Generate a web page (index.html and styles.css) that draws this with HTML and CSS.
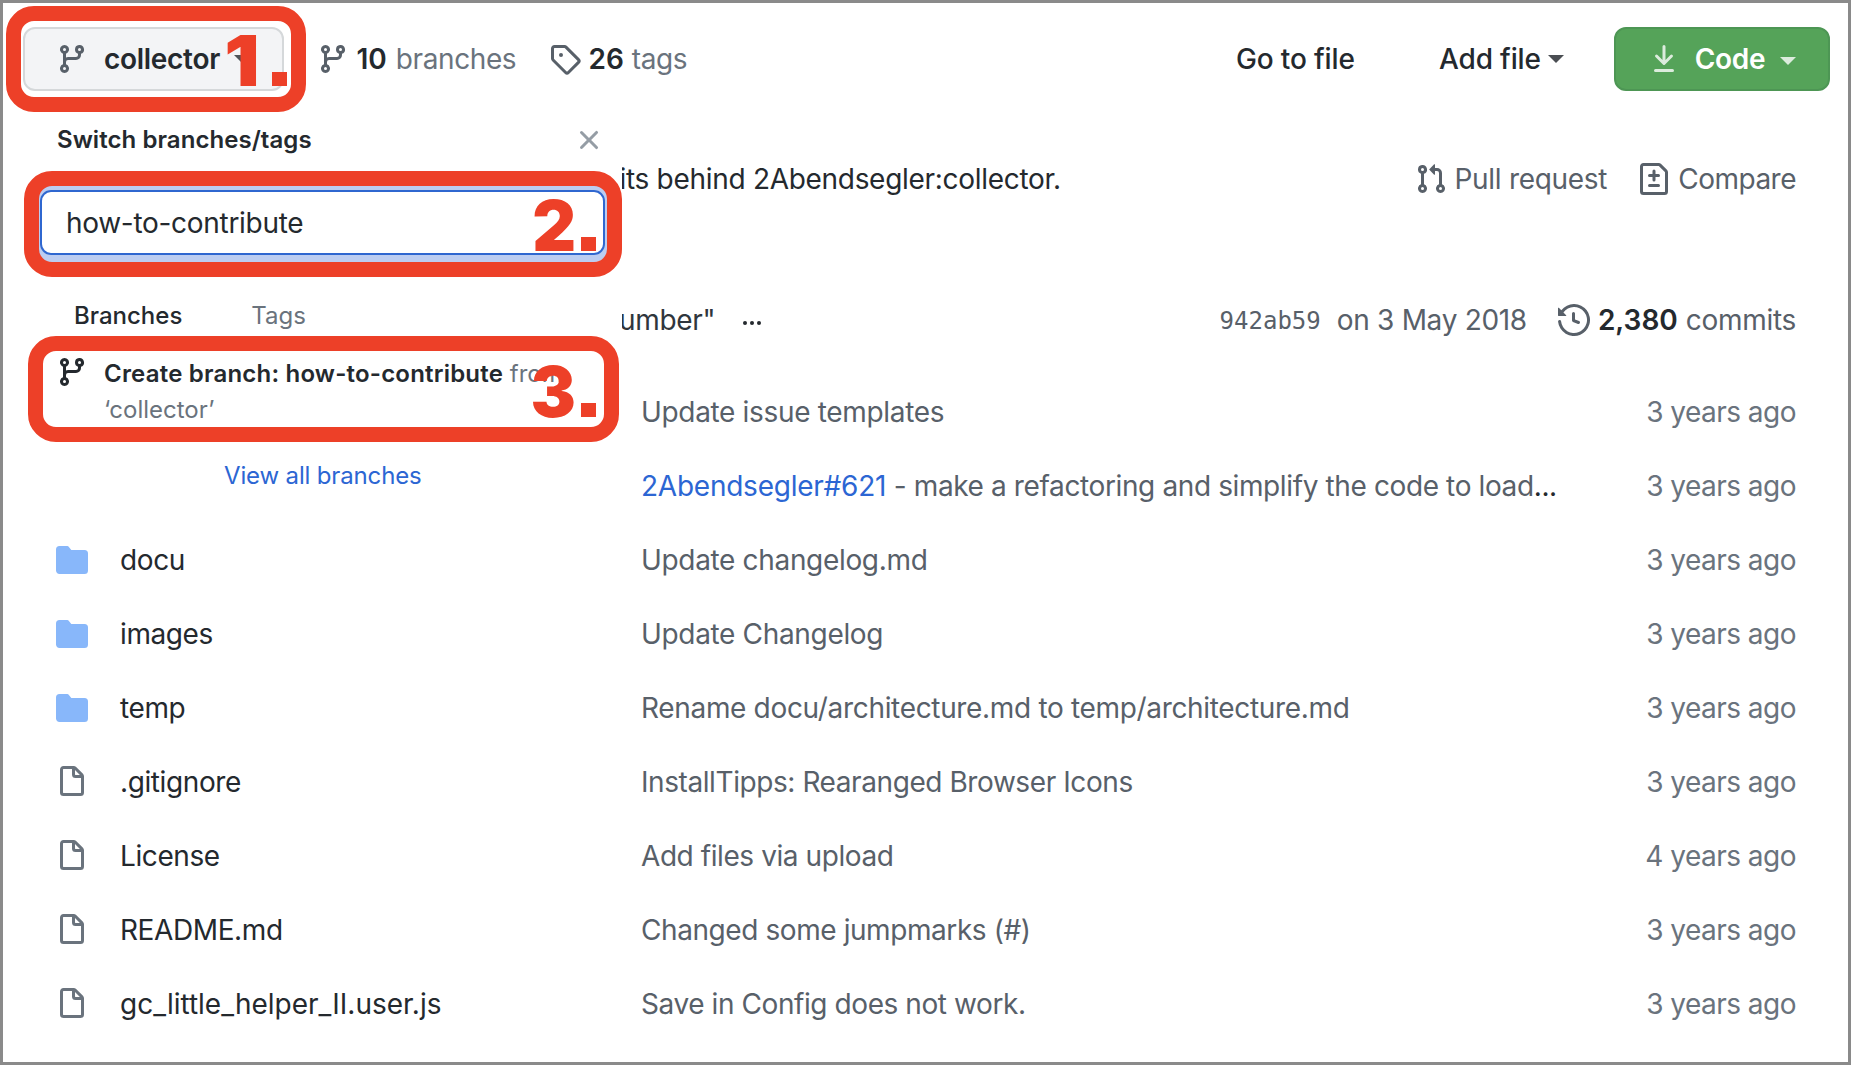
FILE: index.html
```html
<!DOCTYPE html>
<html lang="en">
<head>
<meta charset="utf-8">
<title>Switch branches/tags</title>
<link rel="stylesheet" href="styles.css">
</head>
<body>
<svg class="sprite" aria-hidden="true">
  <symbol id="branch" viewBox="0 0 16 16"><path fill-rule="evenodd" d="M11.75 2.5a.75.75 0 100 1.5.75.75 0 000-1.5zm-2.25.75a2.25 2.25 0 113 2.122V6A2.5 2.5 0 0110 8.5H6a1 1 0 00-1 1v1.128a2.251 2.251 0 11-1.5 0V5.372a2.25 2.25 0 111.5 0v1.836A2.492 2.492 0 016 7h4a1 1 0 001-1v-.628A2.25 2.25 0 019.5 3.25zM4.25 12a.75.75 0 100 1.5.75.75 0 000-1.5zM3.5 3.25a.75.75 0 111.5 0 .75.75 0 01-1.5 0z"/></symbol>
  <symbol id="tag" viewBox="0 0 16 16"><path fill-rule="evenodd" d="M2.5 7.775V2.75a.25.25 0 01.25-.25h5.025a.25.25 0 01.177.073l6.25 6.25a.25.25 0 010 .354l-5.025 5.025a.25.25 0 01-.354 0l-6.25-6.25a.25.25 0 01-.073-.177zm-1.5 0V2.75C1 1.784 1.784 1 2.75 1h5.025c.464 0 .91.184 1.238.513l6.25 6.25a1.75 1.75 0 010 2.474l-5.026 5.026a1.75 1.75 0 01-2.474 0l-6.25-6.25A1.75 1.75 0 011 7.775zM6 5a1 1 0 100 2 1 1 0 000-2z"/></symbol>
  <symbol id="download" viewBox="0 0 16 16"><path fill-rule="evenodd" d="M7.47 10.78a.75.75 0 001.06 0l3.75-3.75a.75.75 0 00-1.06-1.06L8.75 8.44V1.75a.75.75 0 00-1.5 0v6.69L4.78 5.97a.75.75 0 00-1.06 1.06l3.75 3.75zM3.75 13a.75.75 0 000 1.5h8.5a.75.75 0 000-1.5h-8.5z"/></symbol>
  <symbol id="pull" viewBox="0 0 16 16"><path fill-rule="evenodd" d="M7.177 3.073L9.573.677A.25.25 0 0110 .854v4.792a.25.25 0 01-.427.177L7.177 3.427a.25.25 0 010-.354zM3.75 2.5a.75.75 0 100 1.5.75.75 0 000-1.5zm-2.25.75a2.25 2.25 0 113 2.122v5.256a2.251 2.251 0 11-1.5 0V5.372A2.25 2.25 0 011.5 3.25zM11 2.5h-1V4h1a1 1 0 011 1v5.628a2.251 2.251 0 101.5 0V5A2.5 2.5 0 0011 2.5zm1 10.25a.75.75 0 111.5 0 .75.75 0 01-1.5 0zM3.75 12a.75.75 0 100 1.5.75.75 0 000-1.5z"/></symbol>
  <symbol id="diff" viewBox="0 0 16 16"><path fill-rule="evenodd" d="M2.75 1.5a.25.25 0 00-.25.25v12.5c0 .138.112.25.25.25h10.5a.25.25 0 00.25-.25V4.664a.25.25 0 00-.073-.177l-2.914-2.914a.25.25 0 00-.177-.073H2.75zM1 1.75C1 .784 1.784 0 2.75 0h7.586c.464 0 .909.184 1.237.513l2.914 2.914c.329.328.513.773.513 1.237v9.586A1.75 1.75 0 0113.25 16H2.75A1.75 1.75 0 011 14.25V1.75zm7 1.5a.75.75 0 01.75.75v1.5h1.5a.75.75 0 010 1.5h-1.5v1.5a.75.75 0 01-1.5 0V7h-1.5a.75.75 0 010-1.5h1.5V4A.75.75 0 018 3.25zm-3 8a.75.75 0 01.75-.75h4.5a.75.75 0 010 1.5h-4.5a.75.75 0 01-.75-.75z"/></symbol>
  <symbol id="history" viewBox="0 0 16 16"><path fill-rule="evenodd" d="M1.643 3.143L.427 1.927A.25.25 0 000 2.104V5.75c0 .138.112.25.25.25h3.646a.25.25 0 00.177-.427L2.715 4.215a6.5 6.5 0 11-1.18 4.458.75.75 0 10-1.493.154 8.001 8.001 0 101.6-5.684zM7.75 4a.75.75 0 01.75.75v2.992l2.028.812a.75.75 0 01-.557 1.392l-2.5-1A.75.75 0 017 8.25v-3.5A.75.75 0 017.75 4z"/></symbol>
  <symbol id="folder" viewBox="0 0 16 16"><path d="M1.75 1A1.75 1.75 0 000 2.75v10.5C0 14.216.784 15 1.75 15h12.5A1.75 1.75 0 0016 13.25v-8.5A1.75 1.75 0 0014.25 3h-6.5a.25.25 0 01-.2-.1l-.9-1.2c-.33-.44-.85-.7-1.4-.7h-3.5z"/></symbol>
  <symbol id="file" viewBox="0 0 16 16"><path fill-rule="evenodd" d="M3.75 1.5a.25.25 0 00-.25.25v11.5c0 .138.112.25.25.25h8.5a.25.25 0 00.25-.25V6H9.75A1.75 1.75 0 018 4.25V1.5H3.75zm5.75.56v2.19c0 .138.112.25.25.25h2.19L9.5 2.06zM2 1.75C2 .784 2.784 0 3.75 0h5.086c.464 0 .909.184 1.237.513l3.414 3.414c.329.328.513.773.513 1.237v8.086A1.75 1.75 0 0112.25 15h-8.5A1.75 1.75 0 012 13.25V1.75z"/></symbol>
  <symbol id="close" viewBox="0 0 16 16"><path fill-rule="evenodd" d="M3.72 3.72a.75.75 0 011.06 0L8 6.94l3.22-3.22a.75.75 0 111.06 1.06L9.06 8l3.22 3.22a.75.75 0 11-1.06 1.06L8 9.06l-3.22 3.22a.75.75 0 01-1.06-1.06L6.94 8 3.72 4.78a.75.75 0 010-1.06z"/></symbol>
</svg>

<main class="page">
  <header class="toolbar">
    <button class="btn branch-btn"><svg class="icon"><use href="#branch"/></svg><span>collector</span><i class="caret"></i></button>
    <a class="count branches"><svg class="icon"><use href="#branch"/></svg><b>10</b><span>branches</span></a>
    <a class="count tags"><svg class="icon"><use href="#tag"/></svg><b>26</b><span>tags</span></a>
    <span class="action">Go to file</span>
    <span class="action">Add file<i class="caret"></i></span>
    <button class="btn code-btn"><svg class="icon"><use href="#download"/></svg><span>Code</span><i class="caret"></i></button>
  </header>

  <section class="status">
    <span class="behind">its behind 2Abendsegler:collector.</span>
    <a class="compare-link pull"><svg class="icon"><use href="#pull"/></svg><span>Pull request</span></a>
    <a class="compare-link"><svg class="icon"><use href="#diff"/></svg><span>Compare</span></a>
  </section>

  <section class="commit">
    <span class="commit-title">umber"</span>
    <span class="more"><i></i><i></i><i></i></span>
    <code class="hash">942ab59</code>
    <span class="date">on 3 May 2018</span>
    <a class="commits"><svg class="icon"><use href="#history"/></svg><b>2,380</b><span>commits</span></a>
  </section>

  <section class="files">
    <div class="row"><span></span><span></span><span class="msg">Update issue templates</span><span class="age">3 years ago</span></div>
    <div class="row"><span></span><span></span><span class="msg"><a class="link">2Abendsegler#621</a> <span class="long">- make a refactoring and simplify the code to load<span class="dots">...</span></span></span><span class="age">3 years ago</span></div>
    <div class="row"><svg class="icon folder"><use href="#folder"/></svg><span class="name">docu</span><span class="msg">Update changelog.md</span><span class="age">3 years ago</span></div>
    <div class="row"><svg class="icon folder"><use href="#folder"/></svg><span class="name">images</span><span class="msg">Update Changelog</span><span class="age">3 years ago</span></div>
    <div class="row"><svg class="icon folder"><use href="#folder"/></svg><span class="name">temp</span><span class="msg">Rename docu/architecture.md to temp/architecture.md</span><span class="age">3 years ago</span></div>
    <div class="row"><svg class="icon file"><use href="#file"/></svg><span class="name">.gitignore</span><span class="msg tight">InstallTipps: Rearanged Browser Icons</span><span class="age">3 years ago</span></div>
    <div class="row"><svg class="icon file"><use href="#file"/></svg><span class="name">License</span><span class="msg tight">Add files via upload</span><span class="age">4 years ago</span></div>
    <div class="row"><svg class="icon file"><use href="#file"/></svg><span class="name">README.md</span><span class="msg tight">Changed some jumpmarks (#)</span><span class="age">3 years ago</span></div>
    <div class="row"><svg class="icon file"><use href="#file"/></svg><span class="name wide">gc_little_helper_II.user.js</span><span class="msg tight">Save in Config does not work.</span><span class="age">3 years ago</span></div>
  </section>

  <aside class="menu">
    <div class="menu-head"><b>Switch branches/tags</b><svg class="icon"><use href="#close"/></svg></div>
    <div class="field">how-to-contribute</div>
    <nav class="tabs"><span class="tab active">Branches</span><span class="tab">Tags</span></nav>
    <div class="create"><svg class="icon"><use href="#branch"/></svg><p><b>Create branch: how-to-contribute</b> from<br>‘collector’</p></div>
    <a class="view-all">View all branches</a>
  </aside>

  <div class="mark mark-1"><span>1</span><i></i></div>
  <div class="mark mark-2"><span>2</span><i></i></div>
  <div class="mark mark-3"><span>3</span><i></i></div>
</main>
</body>
</html>
```
FILE: styles.css
```css
* { box-sizing: border-box; }
body { margin: 0; font-family: Inter, "Liberation Sans", sans-serif; font-size: 28px; line-height: 40px; letter-spacing: -0.3px; color: #24292e; }
b { font-weight: 600; }
p { margin: 0; }
.sprite { display: none; }
.page { position: relative; height: 1065px; border: 3px solid #8a8a8a; background: #fff; overflow: hidden; white-space: nowrap; }
.icon { width: 32px; height: 32px; flex: none; fill: currentColor; }
.caret { width: 0; height: 0; border: 8px solid transparent; border-top-color: currentColor; border-bottom: 0; flex: none; }

.toolbar { display: grid; grid-template-columns: 293.5px 232px 687.5px 203px 175px 216px; align-items: center; height: 111px; padding-left: 20px; }
.btn { display: flex; align-items: center; height: 64px; padding: 0 0 0 33px; font: inherit; letter-spacing: inherit; border-radius: 12px; }
.btn span { font-weight: 600; }
.branch-btn { width: 261px; border: 2px solid #d5d8da; background: #f3f4f6; color: #24292e; }
.branch-btn .icon { color: #586069; margin-left: -2px; }
.branch-btn span { margin-left: 16px; }
.branch-btn .caret { margin-left: 14px; color: #4f5459; }
.count { display: flex; align-items: center; color: #6a737d; letter-spacing: -0.4px; }
.count .icon { color: #586069; }
.count b { color: #24292e; margin: 0 9px 0 8px; letter-spacing: 0; }
.tags b { margin: 0 8px 0 8px; }
.action { display: flex; align-items: center; font-weight: 500; letter-spacing: -0.15px; }
.action .caret { margin-left: 7px; color: #4a4e53; }
.code-btn { width: 216px; border: 2px solid #4d9654; background: #55a359; color: #fff; }
.code-btn .icon { color: #dcecdd; margin-left: -1px; }
.code-btn span { margin-left: 14px; width: 72px; }
.code-btn .caret { margin: 4px 0 0 14px; color: #dcecdd; }

.status { display: flex; align-items: center; height: 152px; padding: 0 52px 23px 616.5px; color: #24292e; }
.behind { flex: 1; }
.compare-link { display: flex; align-items: center; gap: 8px; color: #586069; }
.compare-link:last-child { letter-spacing: -0.5px; }
.pull { margin-right: 31px; gap: 8px; }

.commit { display: flex; align-items: center; height: 108px; padding: 0 52px 0 616px; color: #586069; }
.commit-title { color: #2f363d; }
.more { display: flex; gap: 3px; margin: 5px auto 0 28px; }
.more i { width: 4px; height: 4px; border-radius: 2px; background: #24292e; }
.hash { font: 24px/40px "DejaVu Sans Mono", monospace; letter-spacing: 0; margin: 2px 16px 0 0; }
.date { margin-right: 31px; }
.commits { display: flex; align-items: center; }
.commits b { color: #24292e; margin: 0 8px 0 8px; letter-spacing: 0; }

.row { display: grid; grid-template-columns: 64px 521px 1fr auto; align-items: center; height: 74px; padding: 0 52px 0 53px; }
.files { margin-top: 1px; }
.folder { color: #88b7fa; }
.file { color: #6a737d; }
.name { color: #24292e; letter-spacing: -0.4px; }
.wide { letter-spacing: 0; }
.msg, .age { color: #586069; }
.msg { letter-spacing: -0.33px; }
.msg.tight { letter-spacing: -0.42px; }
.age { color: #6a737d; letter-spacing: -0.52px; }
.link { color: #2c66d3; letter-spacing: -0.24px; }
.long { letter-spacing: -0.38px; }
.dots { color: #24292e; }

.menu { position: absolute; left: 0; top: 108px; width: 618.5px; height: 398px; padding-top: 9px; background: #fff; font-size: 24px; line-height: 36px; letter-spacing: 0; }
.menu-head { display: flex; align-items: center; justify-content: space-between; height: 40px; padding: 0 17px 0 54px; letter-spacing: 0.06px; }
.menu-head .icon { color: #959da5; }
.field { height: 65px; margin: 30px 17px 0 37px; padding-left: 24px; border: 2px solid #2f67d0; border-radius: 11px; box-shadow: 0 0 0 5px #bccdf1, 0 2px 0 5px #bccdf1; font-size: 28px; line-height: 62px; letter-spacing: -0.3px; }
.tabs { display: flex; height: 36px; margin: 43px 0 0 71px; gap: 69px; }
.tab { color: #6a737d; }
.active { color: #24292e; font-weight: 500; }
.create { display: flex; margin: 21px 0 0 53px; color: #24292e; }
.create .icon { margin-top: 1px; }
.create p { margin: 1px 0 0 16px; color: #6a737d; }
.create b { color: #24292e; letter-spacing: 0.2px; }
.view-all { display: block; margin: 30px 0 0 221px; color: #2c66d3; letter-spacing: -0.15px; }

.mark { position: absolute; width: 598px; height: 106px; border: 15px solid #ed4028; border-radius: 28px; color: #ed4028; display: flex; justify-content: flex-end; align-items: flex-end; }
.mark span { font: 900 70px/70px Inter, "Liberation Sans", sans-serif; letter-spacing: 0; transform: scaleX(0.97); transform-origin: right; margin: 0 5px -10px 0; }
.mark i { width: 15px; height: 14px; background: #ed4028; flex: none; }
.mark-1 { left: 3px; top: 3px; width: 300px; padding: 0 4px 11px 0; }
.mark-1 span { margin-right: 12px; transform: scaleX(1.12); }
.mark-2 { left: 21px; top: 168px; padding: 0 11px 11px 0; }
.mark-3 { left: 25px; top: 333px; width: 591px; padding: 0 8px 10px 0; }
```
